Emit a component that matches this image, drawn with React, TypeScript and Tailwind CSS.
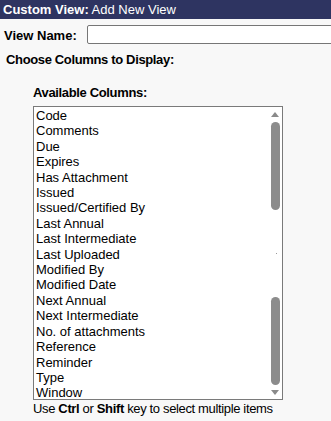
const columns = [
  'Code',
  'Comments',
  'Due',
  'Expires',
  'Has Attachment',
  'Issued',
  'Issued/Certified By',
  'Last Annual',
  'Last Intermediate',
  'Last Uploaded',
  'Modified By',
  'Modified Date',
  'Next Annual',
  'Next Intermediate',
  'No. of attachments',
  'Reference',
  'Reminder',
  'Type',
  'Window',
];

function Scrollbar() {
  return (
    <div className="w-[14px] flex flex-col items-center pt-[5px] pb-[4px]">
      <div className="w-0 h-0 border-l-[4px] border-r-[4px] border-b-[5px] border-l-transparent border-r-transparent border-b-[#8a8a8a]" />
      <div className="w-[9px] h-[88px] mt-[5px] rounded-full bg-[#8c8c8c]" />
      <div className="flex-1 flex flex-col justify-center">
        <div className="w-px h-px bg-[#9a9a9a] ml-[3px]" />
      </div>
      <div className="w-[9px] h-[88px] rounded-full bg-[#8c8c8c]" />
      <div className="w-0 h-0 mt-[5px] border-l-[4px] border-r-[4px] border-t-[5px] border-l-transparent border-r-transparent border-t-[#8a8a8a]" />
    </div>
  );
}

export default function App() {
  return (
    <div className="w-[331px] h-[421px] bg-[#f8f8f8] text-[13px] text-black overflow-hidden font-['Liberation_Sans',_Arial,_sans-serif]">
      <div className="h-[19px] bg-[#2e3461] text-white px-[3px] leading-[19px]">
        <span className="font-bold">Custom View:</span> Add New View
      </div>

      <div className="flex items-center mt-[6px] h-[19px]">
        <label className="font-bold pl-[4px] w-[87px] translate-y-px">View Name:</label>
        <input className="flex-1 h-[19px] bg-white border border-[#767676] rounded-[2px] -mr-[4px]" />
      </div>

      <div className="font-bold pl-[6px] mt-[8px] leading-[16px] tracking-[-0.35px]">
        Choose Columns to Display:
      </div>

      <div className="pl-[33px] mt-[17px]">
        <div className="font-bold leading-[16px] tracking-[-0.35px]">Available Columns:</div>
        <div className="mt-[5px] w-[250px] h-[294px] bg-white border border-[#7a7a7a] flex overflow-hidden">
          <ul className="flex-1 pl-[2px] pt-px leading-[15.4px]">
            {columns.map(c => (
              <li key={c}>{c}</li>
            ))}
          </ul>
          <Scrollbar />
        </div>
        <div className="mt-px leading-[15px] tracking-[-0.35px]">
          Use <b>Ctrl</b> or <b>Shift</b> key to select multiple items
        </div>
      </div>
    </div>
  );
}
